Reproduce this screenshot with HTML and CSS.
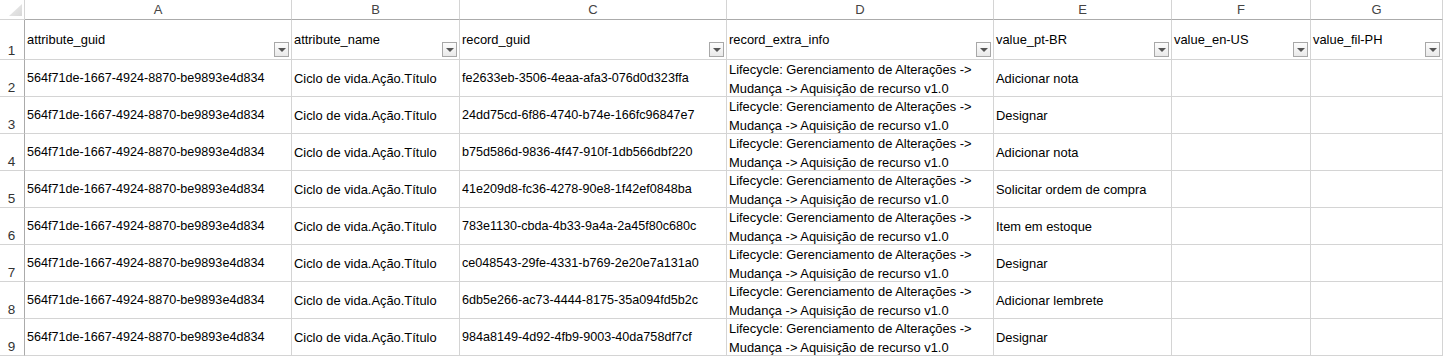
FILE: index.html
```html
<html lang="pt">
<head>
  <title>Planilha</title>
  <link rel="stylesheet" href="styles.css">
</head>
<body>
  <div class="sheet">
    <div class="corner"><span class="corner-mark"></span></div>
    <div class="col-head">A</div>
    <div class="col-head">B</div>
    <div class="col-head">C</div>
    <div class="col-head">D</div>
    <div class="col-head">E</div>
    <div class="col-head">F</div>
    <div class="col-head">G</div>

    <div class="row-head">1</div>
    <div class="cell head">attribute_guid<span class="filter"></span></div>
    <div class="cell head">attribute_name<span class="filter"></span></div>
    <div class="cell head">record_guid<span class="filter"></span></div>
    <div class="cell head">record_extra_info<span class="filter"></span></div>
    <div class="cell head">value_pt-BR<span class="filter"></span></div>
    <div class="cell head">value_en-US<span class="filter"></span></div>
    <div class="cell head">value_fil-PH<span class="filter"></span></div>

    <div class="row-head">2</div>
    <div class="cell guid">564f71de-1667-4924-8870-be9893e4d834</div>
    <div class="cell">Ciclo de vida.Ação.Título</div>
    <div class="cell guid">fe2633eb-3506-4eaa-afa3-076d0d323ffa</div>
    <div class="cell">Lifecycle: Gerenciamento de Alterações -&gt;<br>Mudança -&gt; Aquisição de recurso v1.0</div>
    <div class="cell">Adicionar nota</div>
    <div class="cell"></div>
    <div class="cell"></div>

    <div class="row-head">3</div>
    <div class="cell guid">564f71de-1667-4924-8870-be9893e4d834</div>
    <div class="cell">Ciclo de vida.Ação.Título</div>
    <div class="cell guid">24dd75cd-6f86-4740-b74e-166fc96847e7</div>
    <div class="cell">Lifecycle: Gerenciamento de Alterações -&gt;<br>Mudança -&gt; Aquisição de recurso v1.0</div>
    <div class="cell">Designar</div>
    <div class="cell"></div>
    <div class="cell"></div>

    <div class="row-head">4</div>
    <div class="cell guid">564f71de-1667-4924-8870-be9893e4d834</div>
    <div class="cell">Ciclo de vida.Ação.Título</div>
    <div class="cell guid">b75d586d-9836-4f47-910f-1db566dbf220</div>
    <div class="cell">Lifecycle: Gerenciamento de Alterações -&gt;<br>Mudança -&gt; Aquisição de recurso v1.0</div>
    <div class="cell">Adicionar nota</div>
    <div class="cell"></div>
    <div class="cell"></div>

    <div class="row-head">5</div>
    <div class="cell guid">564f71de-1667-4924-8870-be9893e4d834</div>
    <div class="cell">Ciclo de vida.Ação.Título</div>
    <div class="cell guid">41e209d8-fc36-4278-90e8-1f42ef0848ba</div>
    <div class="cell">Lifecycle: Gerenciamento de Alterações -&gt;<br>Mudança -&gt; Aquisição de recurso v1.0</div>
    <div class="cell">Solicitar ordem de compra</div>
    <div class="cell"></div>
    <div class="cell"></div>

    <div class="row-head">6</div>
    <div class="cell guid">564f71de-1667-4924-8870-be9893e4d834</div>
    <div class="cell">Ciclo de vida.Ação.Título</div>
    <div class="cell guid">783e1130-cbda-4b33-9a4a-2a45f80c680c</div>
    <div class="cell">Lifecycle: Gerenciamento de Alterações -&gt;<br>Mudança -&gt; Aquisição de recurso v1.0</div>
    <div class="cell">Item em estoque</div>
    <div class="cell"></div>
    <div class="cell"></div>

    <div class="row-head">7</div>
    <div class="cell guid">564f71de-1667-4924-8870-be9893e4d834</div>
    <div class="cell">Ciclo de vida.Ação.Título</div>
    <div class="cell guid">ce048543-29fe-4331-b769-2e20e7a131a0</div>
    <div class="cell">Lifecycle: Gerenciamento de Alterações -&gt;<br>Mudança -&gt; Aquisição de recurso v1.0</div>
    <div class="cell">Designar</div>
    <div class="cell"></div>
    <div class="cell"></div>

    <div class="row-head">8</div>
    <div class="cell guid">564f71de-1667-4924-8870-be9893e4d834</div>
    <div class="cell">Ciclo de vida.Ação.Título</div>
    <div class="cell guid">6db5e266-ac73-4444-8175-35a094fd5b2c</div>
    <div class="cell">Lifecycle: Gerenciamento de Alterações -&gt;<br>Mudança -&gt; Aquisição de recurso v1.0</div>
    <div class="cell">Adicionar lembrete</div>
    <div class="cell"></div>
    <div class="cell"></div>

    <div class="row-head">9</div>
    <div class="cell guid">564f71de-1667-4924-8870-be9893e4d834</div>
    <div class="cell">Ciclo de vida.Ação.Título</div>
    <div class="cell guid">984a8149-4d92-4fb9-9003-40da758df7cf</div>
    <div class="cell">Lifecycle: Gerenciamento de Alterações -&gt;<br>Mudança -&gt; Aquisição de recurso v1.0</div>
    <div class="cell">Designar</div>
    <div class="cell"></div>
    <div class="cell"></div>
  </div>
</body>
</html>
```

FILE: styles.css
```css
:root {
  --grid-line: #d4d4d4;
  --head-line: #ababab;
  --head-text: #444;
  --cell-text: #000;
}

* {
  box-sizing: border-box;
}

body {
  margin: 0;
  background: #fff;
  overflow: hidden;
  font-family: "Liberation Sans", Arial, sans-serif;
}

.sheet {
  display: grid;
  grid-template-columns: 25px 267px 168px 267px 267px 178px 139px 132px;
  grid-template-rows: 20px 40px repeat(8, 37px);
  width: 1443px;
}

.sheet > div {
  border-right: 1px solid var(--grid-line);
  border-bottom: 1px solid var(--grid-line);
}

/* top-left corner box */
.corner {
  position: relative;
}

.corner-mark {
  position: absolute;
  left: 9px;
  top: 4px;
  width: 13px;
  height: 12px;
  background: linear-gradient(135deg, #eee, #d8d8d8);
  clip-path: polygon(100% 0, 100% 100%, 0 100%);
}

.sheet > .col-head {
  display: flex;
  align-items: center;
  justify-content: center;
  font-size: 13px;
  color: var(--head-text);
  border-bottom-color: var(--head-line);
}

.sheet > .row-head {
  display: flex;
  align-items: flex-end;
  justify-content: center;
  padding-bottom: 1px;
  padding-right: 1px;
  font-size: 13.5px;
  line-height: 15px;
  color: #333;
  border-right-color: var(--head-line);
}

.cell {
  display: flex;
  align-items: center;
  padding: 1px 2px 0;
  font-size: 12.9px;
  line-height: 19px;
  color: var(--cell-text);
  white-space: nowrap;
  overflow: hidden;
}

.cell.guid {
  font-size: 12.6px;
}

.cell.head {
  position: relative;
  align-items: flex-start;
  padding-top: 10px;
}

/* autofilter dropdown button */
.filter {
  position: absolute;
  right: 2px;
  bottom: 2px;
  width: 15px;
  height: 15px;
  border: 1px solid #a8a8a8;
  background: linear-gradient(#fdfdfd, #e9e9e9);
}

.filter::after {
  content: "";
  position: absolute;
  left: 3px;
  top: 5px;
  border-left: 4px solid transparent;
  border-right: 4px solid transparent;
  border-top: 4px solid #555;
}
```
